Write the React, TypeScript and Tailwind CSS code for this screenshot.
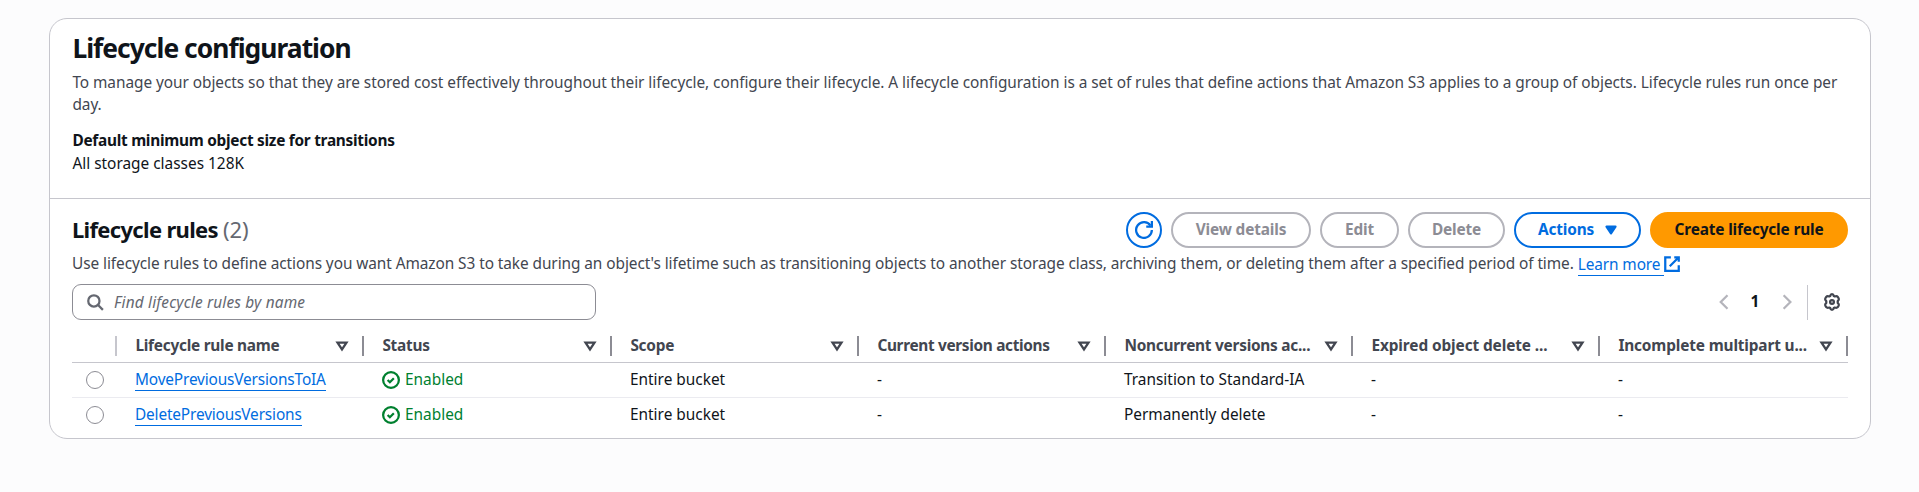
import type { ReactNode } from "react";

const columns = [
  { name: "Lifecycle rule name", tracking: "tracking-[-0.25px]" },
  { name: "Status", tracking: "tracking-[-0.25px]" },
  { name: "Scope", tracking: "tracking-[-0.25px]" },
  { name: "Current version actions", tracking: "tracking-[-0.33px]" },
  { name: "Noncurrent versions ac...", tracking: "tracking-[-0.25px]" },
  { name: "Expired object delete ...", tracking: "tracking-[-0.1px]" },
  { name: "Incomplete multipart u...", tracking: "tracking-[-0.15px]" },
];

const rules = [
  { name: "MovePreviousVersionsToIA", noncurrent: "Transition to Standard-IA" },
  { name: "DeletePreviousVersions", noncurrent: "Permanently delete" },
];

const gridCols = "grid grid-cols-[45px_247px_248px_247px_247px_247px_247px_248px]";

function Icon({ size = 18, className = "", children }: { size?: number; className?: string; children: ReactNode }) {
  return (
    <svg
      width={size}
      height={size}
      viewBox="0 0 16 16"
      fill="none"
      stroke="currentColor"
      strokeWidth="2"
      strokeLinejoin="round"
      className={`shrink-0 ${className}`}
    >
      {children}
    </svg>
  );
}

function Button({ className, children }: { className: string; children: ReactNode }) {
  return (
    <button
      className={`flex h-9 shrink-0 items-center justify-center rounded-full border-2 font-bold tracking-[-0.15px] ${className}`}
    >
      {children}
    </button>
  );
}

function Cell({ children }: { children: ReactNode }) {
  return <div className="flex items-center pl-[18px] text-[#0f141a]">{children}</div>;
}

export default function App() {
  return (
    <div className="min-h-[492px] bg-[#fcfcfd] pt-[18px] pl-[49px] font-['Noto_Sans',sans-serif] text-[15.4px] leading-[22px] text-[#0f141a]">
      <main className="h-[421px] w-[1822px] overflow-hidden rounded-[18px] border border-[#c6c6cd] bg-white">
        <section className="h-[180px] border-b border-[#c6c6cd] pt-[13px] pl-[22.4px]">
          <h1 className="text-[26.4px] leading-[33px] font-bold tracking-[-0.97px]">Lifecycle configuration</h1>
          <p className="mt-[7px] w-[1777px] tracking-[-0.051px] text-[#424650]">
            To manage your objects so that they are stored cost effectively throughout their lifecycle, configure their
            lifecycle. A lifecycle configuration is a set of rules that define actions that Amazon S3 applies to a group
            of objects. Lifecycle rules run once per day.
          </p>
          <h2 className="mt-[14px] font-bold tracking-[-0.27px]">Default minimum object size for transitions</h2>
          <p className="mt-px">All storage classes 128K</p>
        </section>

        <section className="pt-[13px] pr-[22px] pl-[22px]">
          <div className="flex h-9 items-center">
            <h2 className="-mt-0.5 text-[22px] leading-[26px] font-bold tracking-[-0.68px]">
              Lifecycle rules <span className="font-normal tracking-normal text-[#656871]">(2)</span>
            </h2>
            <div className="ml-auto flex gap-[9px]">
              <Button className="w-9 border-[#006ce0] text-[#006ce0]">
                <Icon>
                  <path d="M10 5h5V0" strokeLinejoin="miter" />
                  <path d="M15 8a7 7 0 1 1-1.2-3.9" />
                </Icon>
              </Button>
              <Button className="w-[140px] border-[#b4b4bb] text-[#8c8c94]">View details</Button>
              <Button className="w-[79px] border-[#b4b4bb] text-[#8c8c94]">Edit</Button>
              <Button className="w-[97px] border-[#b4b4bb] text-[#8c8c94]">Delete</Button>
              <Button className="w-[127px] gap-[8px] border-[#006ce0] pl-[3px] text-[#006ce0]">
                Actions
                <Icon>
                  <path d="M4 5h8l-4 6-4-6z" fill="currentColor" />
                </Icon>
              </Button>
              <Button className="w-[198px] border-[#ff9900] bg-[#ff9900] text-[#0f141a]">Create lifecycle rule</Button>
            </div>
          </div>
          <p className="mt-[5px] flex items-center text-[#424650]">
            <span className="whitespace-pre tracking-[-0.072px]">
              {"Use lifecycle rules to define actions you want Amazon S3 to take during an object's lifetime such as transitioning objects to another storage class, archiving them, or deleting them after a specified period of time. "}
            </span>
            <a className="-mb-px h-[22px] w-[86px] border-b border-[#006ce0] leading-[21px] tracking-[-0.1px] text-[#006ce0]">
              Learn more
            </a>
            <Icon className="-ml-px text-[#006ce0]">
              <path d="M10 2h4v4M6 10l8-8M14 9v5H2V2h5" strokeLinejoin="miter" />
            </Icon>
          </p>

          <div className="mt-[9px] flex h-9 items-center">
            <label className="flex h-9 w-[524px] items-center gap-[10px] rounded-[9px] border border-[#8c8c94] pl-[13px] text-[#656871]">
              <Icon>
                <circle cx="7" cy="7" r="5" />
                <path d="m15 15-4.5-4.5" />
              </Icon>
              <span className="pt-px tracking-[0.17px] italic">Find lifecycle rules by name</span>
            </label>
            <div className="ml-auto flex items-center text-[#b4b4bb]">
              <Icon>
                <path d="m12 2-6 6 6 6" strokeLinejoin="miter" />
              </Icon>
              <span className="w-[46px] text-center font-bold text-[#0f141a]">1</span>
              <Icon>
                <path d="m5 2 6 6-6 6" strokeLinejoin="miter" />
              </Icon>
              <span className="ml-[11px] h-[35px] w-px bg-[#c6c6cd]" />
              <Icon className="mr-[7px] ml-[15px] text-[#424650]">
                <circle cx="8" cy="8" r="1.700" />
                <path d="M6.400 2.600C6.600 1.500 7.100 1 8 1s1.400.5 1.600 1.600l.9.500c1.100-.4 2-.4 2.700.4l.8 1.400c.4.900 0 1.500-.9 2.300v1.600c.9.800 1.300 1.400.9 2.300l-.8 1.400c-.7.800-1.600.8-2.700.4l-.9.500C9.400 14.500 8.900 15 8 15s-1.400-.5-1.600-1.600l-.9-.5c-1.100.4-2 .4-2.700-.4L2 11.100c-.4-.9 0-1.500.9-2.300V7.200C2 6.400 1.600 5.800 2 4.900l.8-1.400c.7-.8 1.600-.8 2.700-.4z" />
              </Icon>
            </div>
          </div>

          <div className={`${gridCols} mt-[9px] h-[34px] border-b border-[#c6c6cd]`}>
            <div className="flex items-center justify-end">
              <span className="h-5 w-0.5 bg-[#c6c6cd]" />
            </div>
            {columns.map((column) => (
              <div key={column.name} className="flex items-center pl-[18.4px] text-[#424650]">
                <span className={`pt-px font-bold whitespace-nowrap ${column.tracking}`}>{column.name}</span>
                <Icon className="mr-[11.500px] ml-auto">
                  <path d="M4 5h8l-4 6-4-6z" strokeLinejoin="miter" />
                </Icon>
                <span className="h-5 w-0.5 bg-[#8c8c94]" />
              </div>
            ))}
          </div>
          {rules.map((rule, i) => (
            <div
              key={rule.name}
              className={`${gridCols} ${i === 0 ? "h-[35px] border-b border-[#ebebf0]" : "h-[34px]"}`}
            >
              <div className="flex items-center pl-[14px]">
                <span className="size-[18px] rounded-full border border-[#8c8c94]" />
              </div>
              <Cell>
                <a className="h-[22px] border-b border-[#006ce0] tracking-[-0.155px] text-[#006ce0]">{rule.name}</a>
              </Cell>
              <Cell>
                <span className="flex items-center gap-[5px] text-[#00802f]">
                  <Icon>
                    <circle cx="8" cy="8" r="7" />
                    <path d="m5 8 2 2 3.521-3.521" strokeLinejoin="miter" />
                  </Icon>
                  Enabled
                </span>
              </Cell>
              <Cell>Entire bucket</Cell>
              <Cell>-</Cell>
              <Cell>{rule.noncurrent}</Cell>
              <Cell>-</Cell>
              <Cell>-</Cell>
            </div>
          ))}
        </section>
      </main>
    </div>
  );
}
